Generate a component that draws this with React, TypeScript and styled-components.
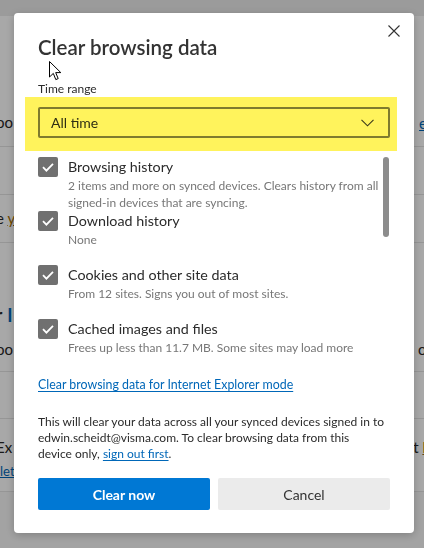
import styled, { createGlobalStyle } from "styled-components";

const GlobalStyle = createGlobalStyle`
  html, body {
    margin: 0;
    padding: 0;
    width: 424px;
    height: 548px;
    overflow: hidden;
    font-family: Lato, "Noto Sans", sans-serif;
  }
`;

type Item = {
  title: string;
  detail: string;
};

const items: Item[] = [
  {
    title: "Browsing history",
    detail:
      "2 items and more on synced devices. Clears history from all signed-in devices that are syncing.",
  },
  { title: "Download history", detail: "None" },
  {
    title: "Cookies and other site data",
    detail: "From 12 sites. Signs you out of most sites.",
  },
  {
    title: "Cached images and files",
    detail: "Frees up less than 11.7 MB. Some sites may load more",
  },
  { title: "Passwords", detail: "None" },
  { title: "Autofill form data (includes forms and cards)", detail: "None" },
];

const App = () => {
  return (
    <>
      <GlobalStyle />
      <Page>
        <TopBand />
        <BgRow height={131}>
          <BgText>oo</BgText>
          <BgLink>e</BgLink>
        </BgRow>
        <BgRow height={48} />
        <BgRow height={48}>
          <BgText>
            e <Mark>y</Mark>
          </BgText>
        </BgRow>
        <BgSection>
          <BgHeading>
            r <BgHeadingBlue>I</BgHeadingBlue>
          </BgHeading>
        </BgSection>
        <BgRow height={47} align="flex-start">
          <BgText>oo</BgText>
          <BgText>ol</BgText>
        </BgRow>
        <BgRow height={47} />
        <BgRow height={73} align="flex-start" column>
          <BgSplit>
            <BgText>Ex</BgText>
            <BgText>
              t <Mark>k</Mark>
            </BgText>
          </BgSplit>
          <BgSmallLink>let</BgSmallLink>
        </BgRow>
      </Page>

      <Backdrop>
        <Dialog>
          <Header>
            <Title>Clear browsing data</Title>
            <CloseButton aria-label="Close">
              <svg width="12" height="12" viewBox="0 0 12 12">
                <path
                  d="M0.5 0.5 L11.5 11.5 M11.5 0.5 L0.5 11.5"
                  stroke="#333"
                  strokeWidth="1.1"
                  fill="none"
                />
              </svg>
            </CloseButton>
          </Header>

          <Label>Time range</Label>
          <Highlight>
            <Select>
              <span>All time</span>
              <svg width="13" height="8" viewBox="0 0 13 8">
                <path
                  d="M0.5 0.8 L6.5 6.8 L12.5 0.8"
                  stroke="#3a3a1a"
                  strokeWidth="1.1"
                  fill="none"
                />
              </svg>
            </Select>
          </Highlight>

          <ListArea>
            <ItemList>
              {items.map((item) => (
                <ItemRow key={item.title}>
                  <Checkbox>
                    <svg width="20" height="20" viewBox="0 0 20 20">
                      <path
                        d="M5 10.2 L8.4 13.6 L15 6.8"
                        stroke="#fff"
                        strokeWidth="1.8"
                        fill="none"
                      />
                    </svg>
                  </Checkbox>
                  <ItemText>
                    <ItemTitle>{item.title}</ItemTitle>
                    <ItemDetail>{item.detail}</ItemDetail>
                  </ItemText>
                </ItemRow>
              ))}
            </ItemList>
            <Track>
              <Thumb />
            </Track>
          </ListArea>

          <IeLink href="#">Clear browsing data for Internet Explorer mode</IeLink>

          <Note>
            This will clear your data across all your synced devices signed in
            to edwin.scheidt@visma.com. To clear browsing data from this
            <br />
            device only, <NoteLink href="#">sign out first</NoteLink>.
          </Note>

          <Buttons>
            <Button primary>Clear now</Button>
            <Button>Cancel</Button>
          </Buttons>
        </Dialog>
      </Backdrop>

      <Cursor>
        <svg width="13" height="20" viewBox="0 0 13 20">
          <path
            d="M0.5 0.5 L0.5 16 L4.3 12.4 L6.8 18.6 L9.2 17.6 L6.7 11.6 L11.8 11.6 Z"
            fill="#fff"
            stroke="#000"
            strokeWidth="1"
          />
        </svg>
      </Cursor>
    </>
  );
};

/* dimmed settings page behind the dialog */
const Page = styled.div`
  width: 424px;
  height: 548px;
  background: #f7f7f7;
  display: flex;
  flex-direction: column;
  color: #262626;
  font-size: 15px;
`;
const TopBand = styled.div`
  height: 16px;
  background: #ececec;
`;
const BgRow = styled.div<{ height: number; align?: string; column?: boolean }>`
  height: ${(p) => p.height}px;
  box-sizing: border-box;
  background: #fff;
  border-bottom: 1px solid #e4e4e4;
  display: flex;
  flex-direction: ${(p) => (p.column ? "column" : "row")};
  justify-content: ${(p) => (p.column ? "flex-start" : "space-between")};
  align-items: ${(p) => (p.column ? "stretch" : p.align || "flex-end")};
  padding: ${(p) => (p.align ? "14px 0 0" : "0 0 14px")};
`;
const BgSplit = styled.div`
  display: flex;
  justify-content: space-between;
  padding-top: 4px;
`;
const BgText = styled.span`
  margin-left: -4px;
  margin-right: -6px;
  line-height: 20px;
`;
const Mark = styled.span`
  color: #a36b00;
  text-decoration: underline;
`;
const BgLink = styled.span`
  color: #0067b8;
  text-decoration: underline;
  margin-right: -3px;
`;
const BgSmallLink = styled.span`
  color: #0067b8;
  text-decoration: underline;
  font-size: 13px;
  margin-top: 6px;
`;
const BgSection = styled.div`
  height: 82px;
  background: #fff;
  display: flex;
  align-items: flex-end;
  box-sizing: border-box;
`;
const BgHeading = styled.span`
  font-size: 20px;
  line-height: 22px;
  font-weight: 600;
  margin-left: -5px;
`;
const BgHeadingBlue = styled.span`
  color: #0067b8;
`;

const Backdrop = styled.div`
  position: fixed;
  inset: 0;
  background: rgba(0, 0, 0, 0.34);
  display: flex;
  align-items: flex-start;
  padding: 13px 0 0 14px;
`;
const Dialog = styled.div`
  width: 400px;
  height: 520px;
  box-sizing: border-box;
  background: #fff;
  border-radius: 4px;
  box-shadow: 0 2px 10px rgba(0, 0, 0, 0.22);
  padding: 0 24px;
  display: flex;
  flex-direction: column;
  color: #2b2b2b;
`;
const Header = styled.div`
  display: flex;
  justify-content: space-between;
  align-items: flex-start;
  padding-top: 12px;
`;
const Title = styled.h1`
  margin: 8px 0 0;
  font-size: 20.5px;
  line-height: 28px;
  font-weight: 600;
  color: #333;
`;
const CloseButton = styled.button`
  width: 12px;
  height: 12px;
  padding: 0;
  margin-right: -10px;
  border: none;
  background: none;
  display: flex;
`;
const Label = styled.div`
  margin-top: 20px;
  font-size: 12px;
  line-height: 16px;
  color: #2b2b2b;
`;
const Highlight = styled.div`
  margin: 0 -7px 0 -13px;
  padding: 10px 7px 13px 13px;
  background: #fff35c;
`;
const Select = styled.div`
  height: 31px;
  box-sizing: border-box;
  border: 2px solid #7f7b2e;
  border-radius: 2px;
  display: flex;
  align-items: center;
  justify-content: space-between;
  padding: 0 14px 0 11px;
  font-size: 14px;
  color: #2f2f14;
`;
const ListArea = styled.div`
  height: 211px;
  display: flex;
  padding-top: 6px;
  box-sizing: border-box;
  overflow: hidden;
`;
const ItemList = styled.div`
  flex: 1;
  min-width: 0;
  display: flex;
  flex-direction: column;
  gap: 2px;
`;
const ItemRow = styled.div`
  display: flex;
  min-height: 52px;
  gap: 10px;
`;
const Checkbox = styled.div`
  width: 20px;
  height: 20px;
  flex-shrink: 0;
  background: #707070;
  border-radius: 2px;
  display: flex;
`;
const ItemText = styled.div`
  flex: 1;
  display: flex;
  flex-direction: column;
`;
const ItemTitle = styled.div`
  font-size: 14.3px;
  line-height: 20px;
  color: #2b2b2b;
`;
const ItemDetail = styled.div`
  font-size: 12px;
  line-height: 17px;
  color: #777;
`;
const Track = styled.div`
  width: 6px;
  margin-right: 1px;
  flex-shrink: 0;
`;
const Thumb = styled.div`
  height: 80px;
  border-radius: 3px;
  background: #8c8c8c;
`;
const IeLink = styled.a`
  margin-top: 14px;
  align-self: flex-start;
  font-size: 12.4px;
  line-height: 18px;
  color: #0067b8;
  text-decoration: underline;
  text-underline-offset: 2px;
`;
const Note = styled.p`
  margin: 20px 0 0;
  font-size: 12px;
  line-height: 16px;
  color: #2b2b2b;
`;
const NoteLink = styled.a`
  color: #0067b8;
  text-decoration: underline;
  text-underline-offset: 2px;
`;
const Buttons = styled.div`
  margin-top: 16px;
  display: grid;
  grid-template-columns: 1fr 1fr;
  gap: 8px;
`;
const Button = styled.button<{ primary?: boolean }>`
  height: 32px;
  border: none;
  border-radius: 2px;
  font-family: inherit;
  font-size: 14px;
  font-weight: ${(p) => (p.primary ? 700 : 400)};
  background: ${(p) => (p.primary ? "#0078d4" : "#ebebeb")};
  color: ${(p) => (p.primary ? "#fff" : "#333")};
`;
const Cursor = styled.div`
  position: fixed;
  left: 49px;
  top: 61px;
  display: flex;
  pointer-events: none;
`;

export default App;
